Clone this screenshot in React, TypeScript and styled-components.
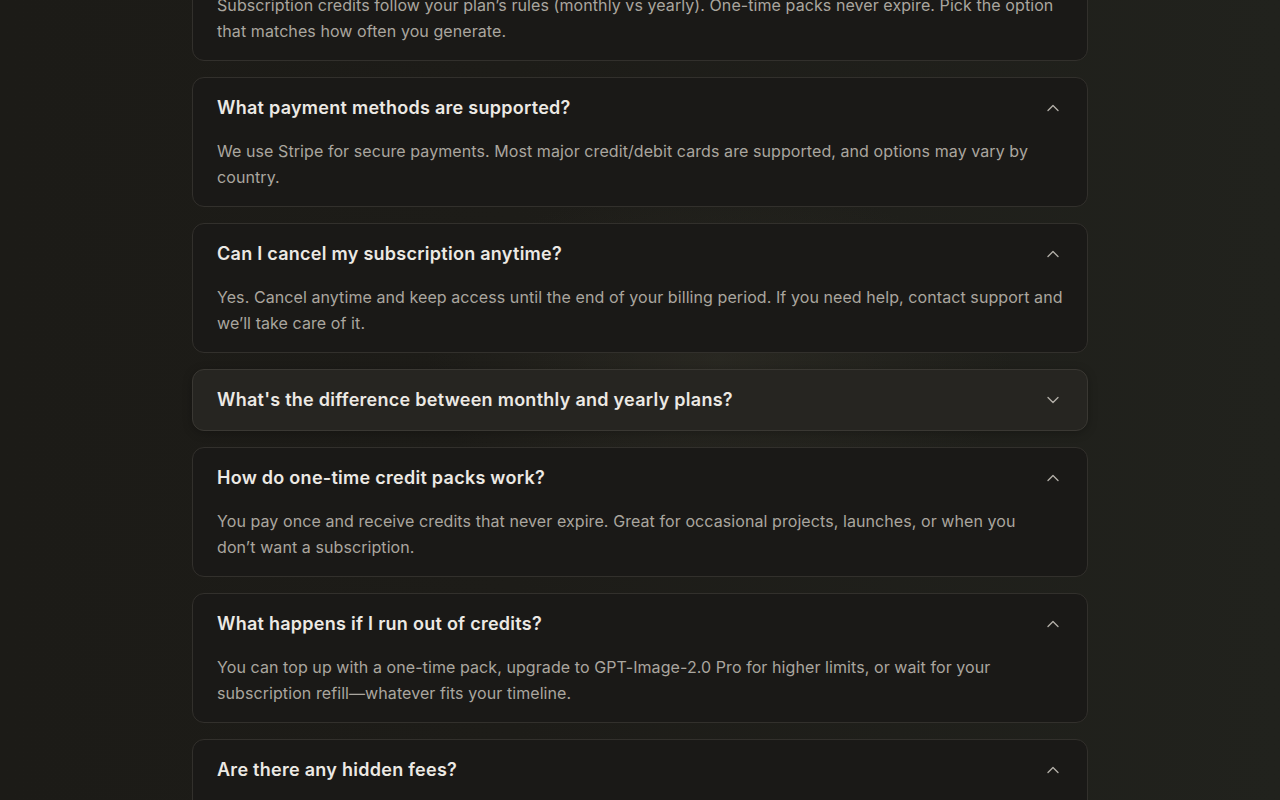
import styled, { createGlobalStyle } from 'styled-components'
import { ChevronDown, ChevronUp } from 'lucide-react'

type FaqItem = {
  question: string
  answer: string
  open: boolean
  active?: boolean
}

const FAQ: FaqItem[] = [
  {
    question: 'Do my credits expire?',
    answer:
      'Subscription credits follow your plan’s rules (monthly vs yearly). One-time packs never expire. Pick the option that matches how often you generate.',
    open: true,
  },
  {
    question: 'What payment methods are supported?',
    answer:
      'We use Stripe for secure payments. Most major credit/debit cards are supported, and options may vary by country.',
    open: true,
  },
  {
    question: 'Can I cancel my subscription anytime?',
    answer:
      'Yes. Cancel anytime and keep access until the end of your billing period. If you need help, contact support and we’ll take care of it.',
    open: true,
  },
  {
    question: "What's the difference between monthly and yearly plans?",
    answer: 'Yearly plans are billed once a year at a lower effective monthly price.',
    open: false,
    active: true,
  },
  {
    question: 'How do one-time credit packs work?',
    answer:
      'You pay once and receive credits that never expire. Great for occasional projects, launches, or when you don’t\u00a0want a subscription.',
    open: true,
  },
  {
    question: 'What happens if I run out of credits?',
    answer:
      'You can top up with a one-time pack, upgrade to GPT-Image-2.0 Pro for higher limits, or wait for your subscription refill—whatever fits your timeline.',
    open: true,
  },
  {
    question: 'Are there any hidden fees?',
    answer: 'No. The price you see is the price you pay. Taxes may apply depending on your region.',
    open: true,
  },
]

export default function App() {
  return (
    <>
      <GlobalStyle />
      <Page>
        <List>
          {FAQ.map((item) => (
            <Card key={item.question} $active={item.active}>
              <Header>
                <Question>{item.question}</Question>
                <Chevron>
                  {item.open ? (
                    <ChevronUp size={20} strokeWidth={1.6} />
                  ) : (
                    <ChevronDown size={20} strokeWidth={1.6} />
                  )}
                </Chevron>
              </Header>
              {item.open && <Answer>{item.answer}</Answer>}
            </Card>
          ))}
        </List>
      </Page>
    </>
  )
}

const GlobalStyle = createGlobalStyle`
  html, body {
    margin: 0;
    padding: 0;
    background: #1c1b17;
  }
  body {
    font-family: Inter, "Noto Sans", sans-serif;
    -webkit-font-smoothing: antialiased;
  }
`

const Page = styled.main`
  min-height: 800px;
  overflow: hidden;
  background:
    radial-gradient(ellipse 420px 260px at 720px 360px, rgba(60, 58, 48, 0.35), transparent 70%),
    linear-gradient(90deg, #1c1b17 0%, #1d1c18 40%, #21221d 100%);
`

const List = styled.div`
  width: 896px;
  margin: -69px auto 0;
  display: flex;
  flex-direction: column;
  gap: 16px;
  padding-bottom: 40px;
`

const Card = styled.section<{ $active?: boolean }>`
  border-radius: 12px;
  border: 1px solid ${(p) => (p.$active ? '#3a3833' : '#32302c')};
  background-color: ${(p) => (p.$active ? '#262521' : '#1a1917')};
  box-shadow: ${(p) => (p.$active ? '0 2px 10px rgba(0, 0, 0, 0.25)' : 'none')};
`

const Header = styled.div`
  display: flex;
  align-items: center;
  justify-content: space-between;
  gap: 16px;
  padding: 16px 24px;
`

const Question = styled.h3`
  margin: 0;
  font-size: 18px;
  line-height: 28px;
  font-weight: 600;
  letter-spacing: 0.27px;
  color: #ece9e4;
`

const Chevron = styled.span`
  display: flex;
  align-items: center;
  color: #b3afa8;
`

const Answer = styled.p`
  margin: 0;
  padding: 0 24px 16px;
  font-size: 16px;
  line-height: 26px;
  letter-spacing: 0.08px;
  color: #aaa69f;
`
